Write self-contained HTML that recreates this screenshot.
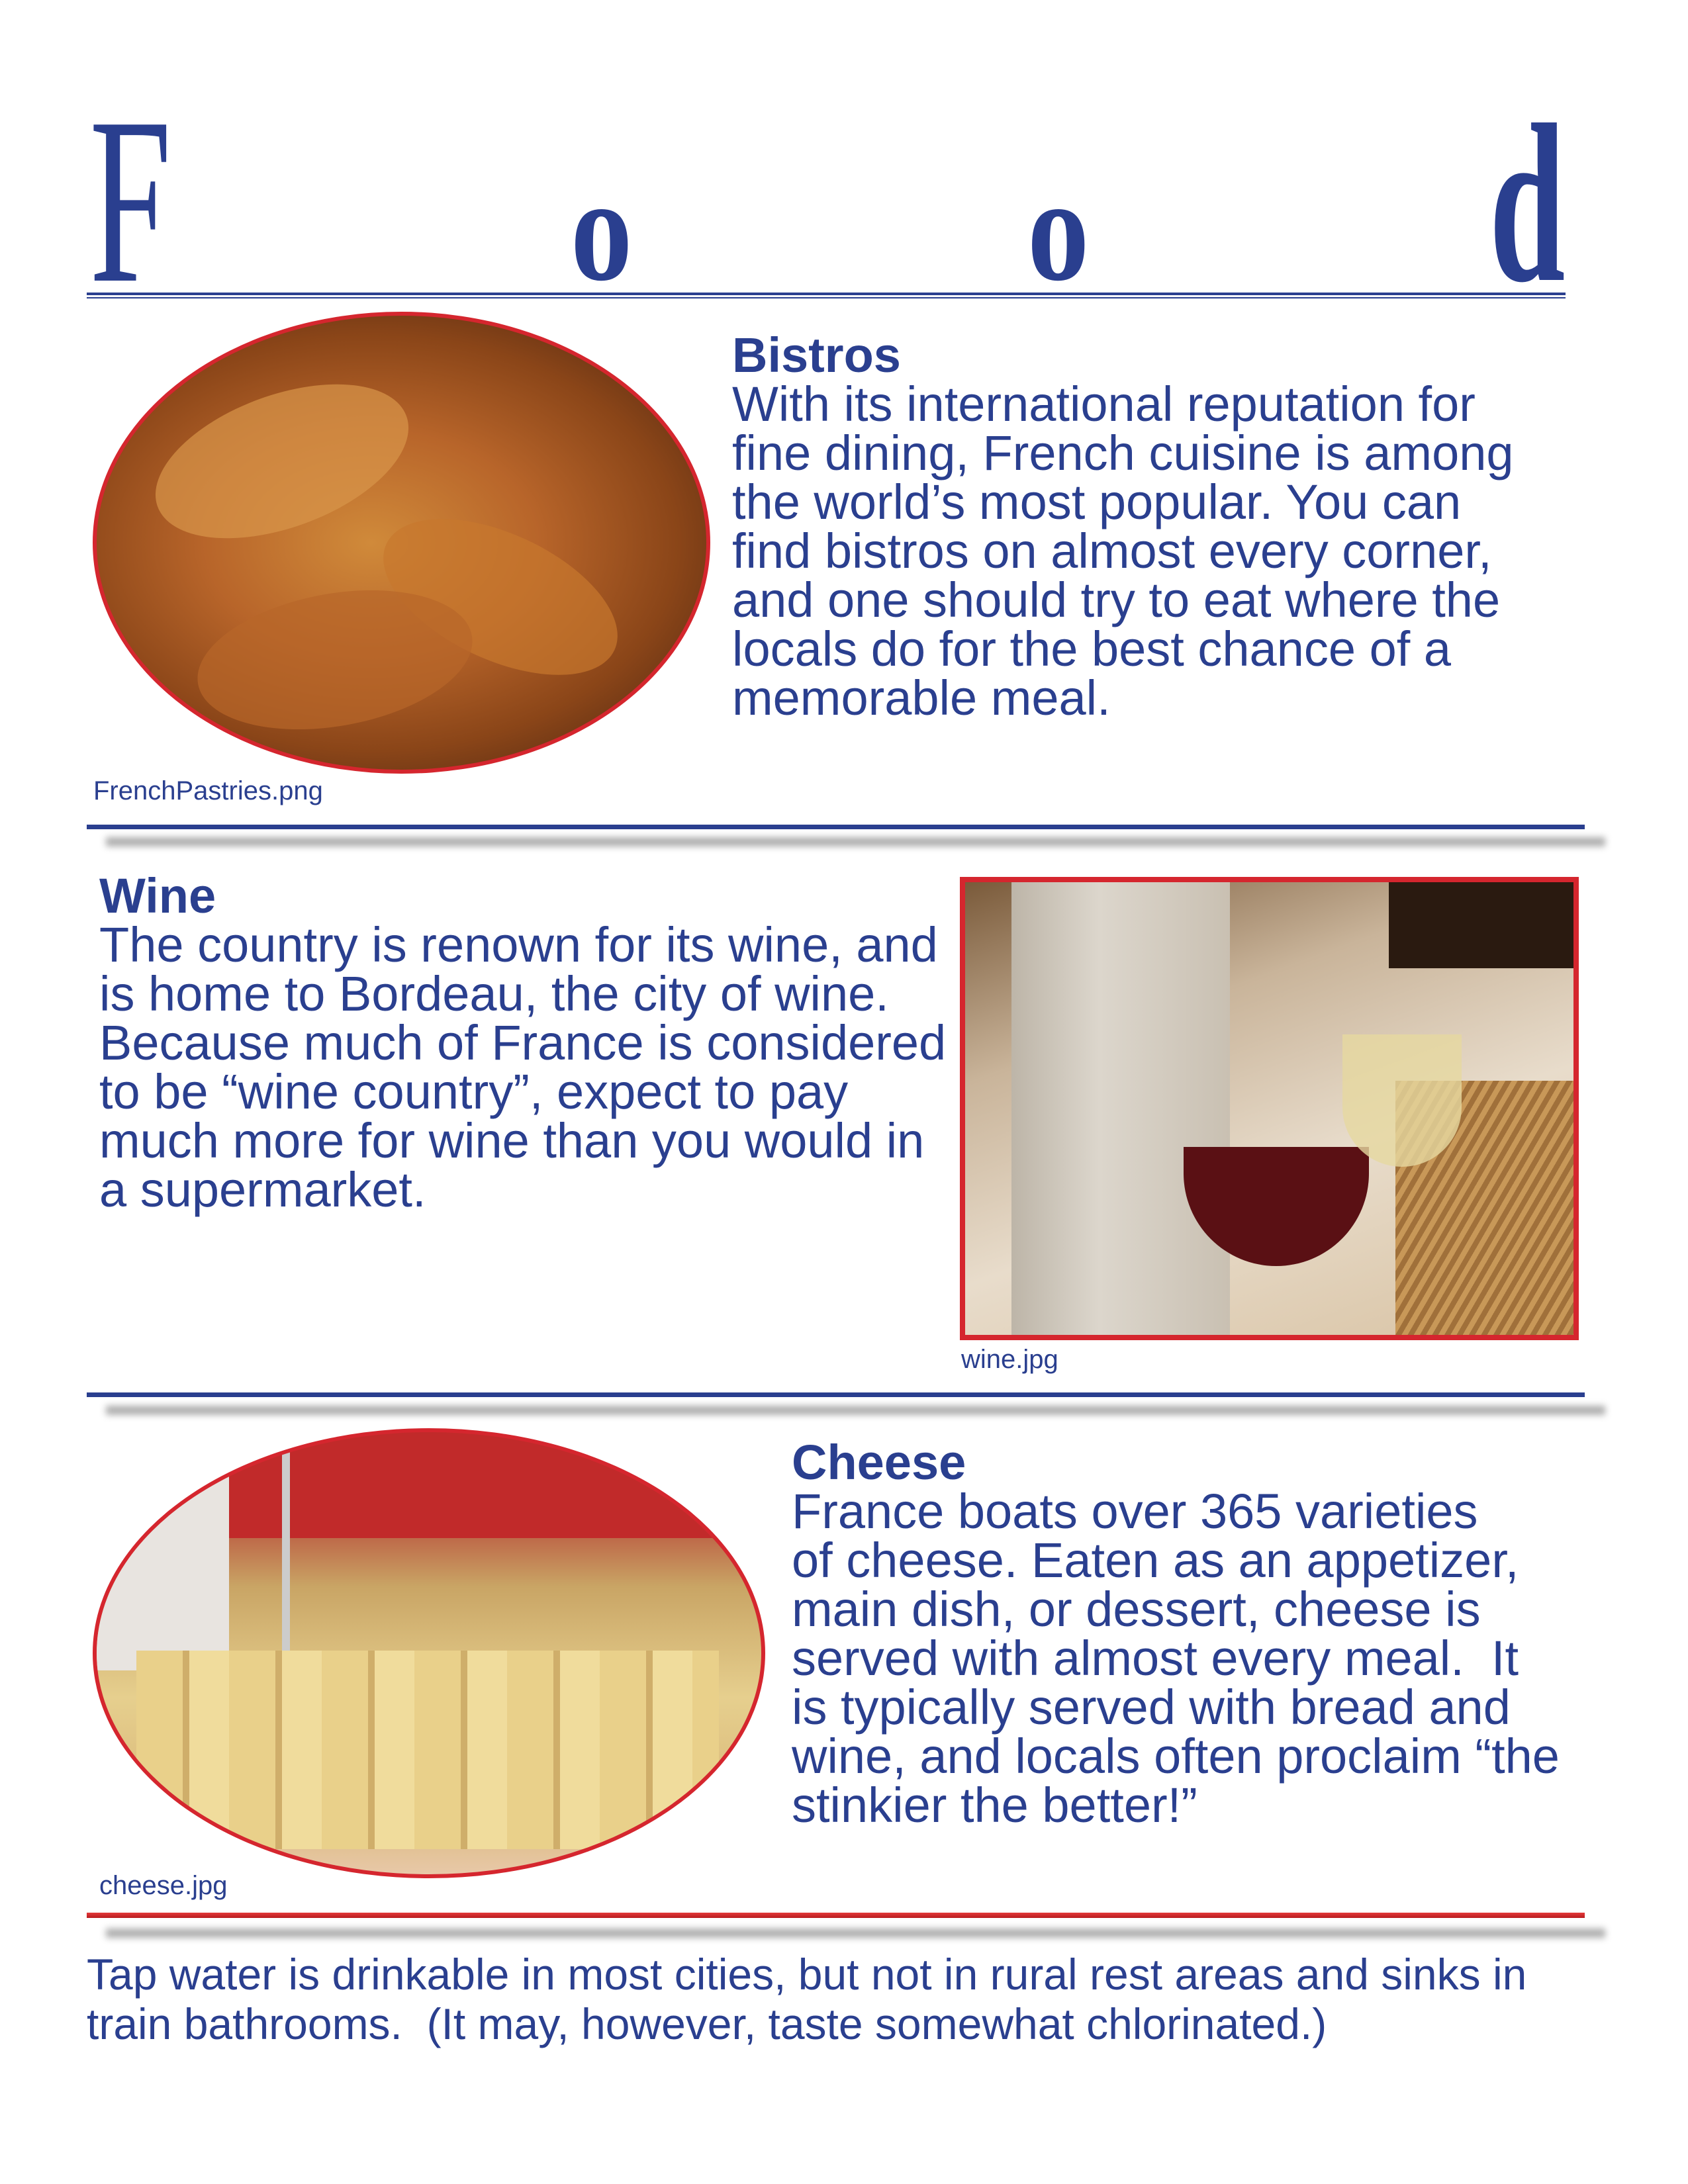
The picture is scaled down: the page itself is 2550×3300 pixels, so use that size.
<!DOCTYPE html>
<html><head><meta charset="utf-8"><style>
html,body{margin:0;padding:0;background:#fff}
body{width:2550px;height:3300px;position:relative;overflow:hidden;font-family:"Liberation Sans",Arial,sans-serif;color:#2a3f8f}
.t{position:absolute;font-family:"Liberation Serif",serif;color:#2a3f8f;transform-origin:left top}
.blk{position:absolute;font-size:74px;line-height:74px;white-space:nowrap}
.blk b{font-weight:bold}
.cap{position:absolute;font-size:40px;line-height:40px;white-space:nowrap}
.line{position:absolute;left:131px;width:2263px;height:7px;background:#2a3f8f}
.sh{position:absolute;left:160px;width:2265px;height:14px;background:#9a9a9a;filter:blur(5px);opacity:.8}
</style></head><body>
<div class="t" style="left:135px;top:123px;font-size:360px;line-height:360px;transform:scaleX(0.62)">F</div>
<div class="t" style="left:862px;top:234px;font-size:225px;line-height:225px;font-weight:bold;transform:scaleX(0.83)">o</div>
<div class="t" style="left:1552px;top:234px;font-size:225px;line-height:225px;font-weight:bold;transform:scaleX(0.83)">o</div>
<div class="t" style="left:2250px;top:137px;font-size:343px;line-height:343px;font-weight:bold;transform:scaleX(0.6)">d</div>
<div style="position:absolute;left:131px;top:442px;width:2234px;height:4px;background:#2a3f8f"></div>
<div style="position:absolute;left:131px;top:449px;width:2234px;height:2px;background:#2a3f8f"></div>

<div style="position:absolute;left:140px;top:471px;width:921px;height:686px;border:6px solid #d5262e;border-radius:50%;overflow:hidden;background:radial-gradient(ellipse at 45% 50%,#d08a3a 0%,#b8652a 35%,#8a4518 65%,#3a1c10 100%)">
<div style="position:absolute;left:80px;top:120px;width:400px;height:200px;border-radius:50%;background:#d9954a;opacity:.7;transform:rotate(-20deg)"></div>
<div style="position:absolute;left:420px;top:330px;width:380px;height:190px;border-radius:50%;background:#c8782e;opacity:.7;transform:rotate(25deg)"></div>
<div style="position:absolute;left:150px;top:420px;width:420px;height:200px;border-radius:50%;background:#b8662a;opacity:.7;transform:rotate(-10deg)"></div>
</div>
<div class="blk" style="left:1106px;top:500px"><b>Bistros</b><br>With its international reputation for<br>fine dining, French cuisine is among<br>the world’s most popular. You can<br>find bistros on almost every corner,<br>and one should try to eat where the<br>locals do for the best chance of a<br>memorable meal.</div>
<div class="cap" style="left:141px;top:1175px">FrenchPastries.png</div>
<div class="line" style="top:1246px"></div>
<div class="sh" style="top:1265px"></div>

<div class="blk" style="left:150px;top:1317px"><b>Wine</b><br>The country is renown for its wine, and<br>is home to Bordeau, the city of wine.<br>Because much of France is considered<br>to be “wine country”, expect to pay<br>much more for wine than you would in<br>a supermarket.</div>
<div style="position:absolute;left:1450px;top:1325px;width:919px;height:684px;border:8px solid #d5262e;overflow:hidden;background:linear-gradient(160deg,#7a5a3a 0%,#c9b49a 30%,#e8dccb 60%,#d8c2a2 100%)">
<div style="position:absolute;left:70px;top:0;width:330px;height:684px;background:linear-gradient(90deg,#bdb5a8,#dcd6cc 40%,#c9c0b2);"></div>
<div style="position:absolute;left:640px;top:0;width:280px;height:130px;background:#2a1a10"></div>
<div style="position:absolute;left:650px;top:300px;width:270px;height:384px;background:repeating-linear-gradient(120deg,#a0703a 0 8px,#c89858 8px 16px)"></div>
<div style="position:absolute;left:330px;top:400px;width:280px;height:180px;border-radius:0 0 140px 140px;background:#5a1014"></div>
<div style="position:absolute;left:570px;top:230px;width:180px;height:200px;border-radius:0 0 90px 90px;background:#e6d8a0;opacity:.8"></div>
</div>
<div class="cap" style="left:1452px;top:2034px">wine.jpg</div>
<div class="line" style="top:2104px"></div>
<div class="sh" style="top:2124px"></div>

<div style="position:absolute;left:140px;top:2158px;width:1004px;height:668px;border:6px solid #d5262e;border-radius:50%;overflow:hidden;background:linear-gradient(180deg,#c83030 0%,#b84a3a 18%,#c9a565 35%,#e6cf8e 60%,#d9b878 85%,#e8c8a8 100%)">
<div style="position:absolute;left:0;top:0;width:1004px;height:160px;background:#c12a2a"></div>
<div style="position:absolute;left:0;top:60px;width:200px;height:300px;background:#e8e4e0"></div>
<div style="position:absolute;left:280px;top:20px;width:12px;height:600px;background:#ccc"></div>
<div style="position:absolute;left:60px;top:330px;width:880px;height:300px;background:repeating-linear-gradient(90deg,#e9d08a 0 70px,#cfae6a 70px 80px,#f0dc9c 80px 140px)"></div>
</div>
<div class="blk" style="left:1196px;top:2173px"><b>Cheese</b><br>France boats over 365 varieties<br>of cheese. Eaten as an appetizer,<br>main dish, or dessert, cheese is<br>served with almost every meal.&nbsp; It<br>is typically served with bread and<br>wine, and locals often proclaim “the<br>stinkier the better!”</div>
<div class="cap" style="left:150px;top:2829px">cheese.jpg</div>
<div class="line" style="top:2890px;height:8px;background:linear-gradient(180deg,#e53a3a,#b81c20)"></div>
<div class="sh" style="top:2914px"></div>

<div class="blk" style="left:131px;top:2946px;font-size:66px;line-height:75px">Tap water is drinkable in most cities, but not in rural rest areas and sinks in<br>train bathrooms.&nbsp; (It may, however, taste somewhat chlorinated.)</div>
</body></html>
